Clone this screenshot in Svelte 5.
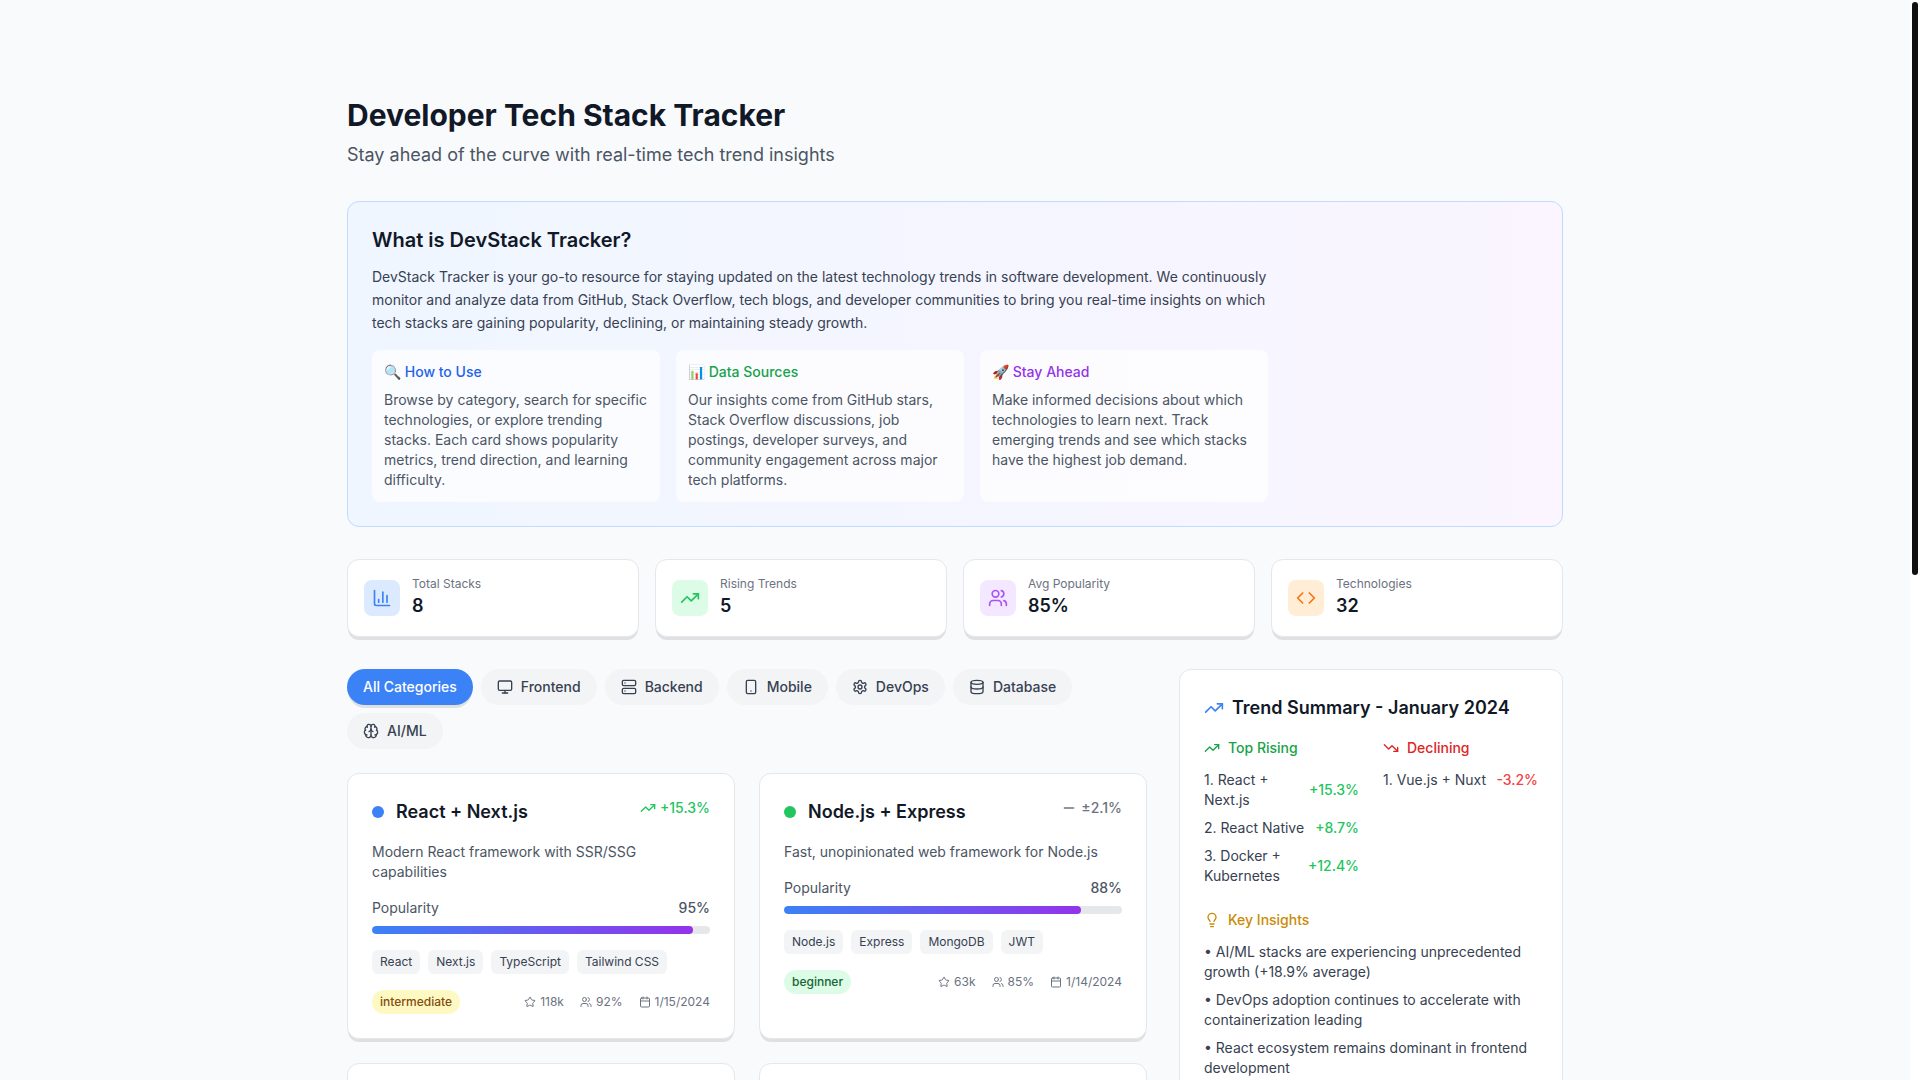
<script lang="ts">
  // Lucide-style 24x24 stroke icons, keyed by name
  const ICONS: Record<string, string> = {
    chart: '<path d="M3 3v16a2 2 0 0 0 2 2h16"/><path d="M18 17V9"/><path d="M13 17V5"/><path d="M8 17v-3"/>',
    up: '<path d="M16 7h6v6"/><path d="m22 7-8.5 8.5-5-5L2 17"/>',
    down: '<path d="M16 17h6v-6"/><path d="m22 17-8.5-8.5-5 5L2 7"/>',
    minus: '<path d="M5 12h14"/>',
    users:
      '<path d="M16 21v-2a4 4 0 0 0-4-4H6a4 4 0 0 0-4 4v2"/><path d="M16 3.128a4 4 0 0 1 0 7.744"/><path d="M22 21v-2a4 4 0 0 0-3-3.87"/><circle cx="9" cy="7" r="4"/>',
    code: '<path d="m16 18 6-6-6-6"/><path d="m8 6-6 6 6 6"/>',
    monitor: '<rect width="20" height="14" x="2" y="3" rx="2"/><path d="M8 21h8"/><path d="M12 17v4"/>',
    server:
      '<rect width="20" height="8" x="2" y="2" rx="2"/><rect width="20" height="8" x="2" y="14" rx="2"/><path d="M6 6h.01"/><path d="M6 18h.01"/>',
    phone: '<rect width="14" height="20" x="5" y="2" rx="2"/><path d="M12 18h.01"/>',
    settings:
      '<path d="M12.22 2h-.44a2 2 0 0 0-2 2v.18a2 2 0 0 1-1 1.73l-.43.25a2 2 0 0 1-2 0l-.15-.08a2 2 0 0 0-2.73.73l-.22.38a2 2 0 0 0 .73 2.73l.15.1a2 2 0 0 1 1 1.72v.51a2 2 0 0 1-1 1.74l-.15.09a2 2 0 0 0-.73 2.73l.22.38a2 2 0 0 0 2.73.73l.15-.08a2 2 0 0 1 2 0l.43.25a2 2 0 0 1 1 1.73V20a2 2 0 0 0 2 2h.44a2 2 0 0 0 2-2v-.18a2 2 0 0 1 1-1.73l.43-.25a2 2 0 0 1 2 0l.15.08a2 2 0 0 0 2.73-.73l.22-.39a2 2 0 0 0-.73-2.73l-.15-.08a2 2 0 0 1-1-1.74v-.5a2 2 0 0 1 1-1.74l.15-.09a2 2 0 0 0 .73-2.73l-.22-.38a2 2 0 0 0-2.73-.73l-.15.08a2 2 0 0 1-2 0l-.43-.25a2 2 0 0 1-1-1.73V4a2 2 0 0 0-2-2z"/><circle cx="12" cy="12" r="3"/>',
    database:
      '<ellipse cx="12" cy="5" rx="9" ry="3"/><path d="M3 5v14a9 3 0 0 0 18 0V5"/><path d="M3 12a9 3 0 0 0 18 0"/>',
    brain:
      '<path d="M12 18V5"/><path d="M15 13a4.17 4.17 0 0 1-3-4 4.17 4.17 0 0 1-3 4"/><path d="M17.598 6.5A3 3 0 1 0 12 5a3 3 0 1 0-5.598 1.5"/><path d="M17.997 5.125a4 4 0 0 1 2.526 5.77"/><path d="M18 18a4 4 0 0 0 2-7.464"/><path d="M19.967 17.483A4 4 0 1 1 12 18a4 4 0 1 1-7.967-.517"/><path d="M6 18a4 4 0 0 1-2-7.464"/><path d="M6.003 5.125a4 4 0 0 0-2.526 5.77"/>',
    bulb: '<path d="M15 14c.2-1 .7-1.7 1.5-2.5 1-.9 1.5-2.2 1.5-3.5A6 6 0 0 0 6 8c0 1 .2 2.2 1.5 3.5.7.7 1.3 1.5 1.5 2.5"/><path d="M9 18h6"/><path d="M10 22h4"/>',
    star: '<path d="M11.525 2.295a.53.53 0 0 1 .95 0l2.31 4.679a2.123 2.123 0 0 0 1.595 1.16l5.166.756a.53.53 0 0 1 .294.904l-3.736 3.638a2.123 2.123 0 0 0-.611 1.878l.882 5.14a.53.53 0 0 1-.771.56l-4.618-2.428a2.122 2.122 0 0 0-1.973 0L6.396 21.01a.53.53 0 0 1-.77-.56l.881-5.139a2.122 2.122 0 0 0-.611-1.879L2.16 9.795a.53.53 0 0 1 .294-.906l5.165-.755a2.122 2.122 0 0 0 1.597-1.16z"/>',
    calendar: '<path d="M8 2v4"/><path d="M16 2v4"/><rect width="18" height="18" x="3" y="4" rx="2"/><path d="M3 10h18"/>',
  }

  const guides = [
    {
      title: '🔍 How to Use',
      tone: 'blue',
      text: 'Browse by category, search for specific technologies, or explore trending stacks. Each card shows popularity metrics, trend direction, and learning difficulty.',
    },
    {
      title: '📊 Data Sources',
      tone: 'green',
      text: 'Our insights come from GitHub stars, Stack Overflow discussions, job postings, developer surveys, and community engagement across major tech platforms.',
    },
    {
      title: '🚀 Stay Ahead',
      tone: 'purple',
      text: 'Make informed decisions about which technologies to learn next. Track emerging trends and see which stacks have the highest job demand.',
    },
  ]

  const stats = [
    { label: 'Total Stacks', value: '8', icon: 'chart', tone: 'blue' },
    { label: 'Rising Trends', value: '5', icon: 'up', tone: 'green' },
    { label: 'Avg Popularity', value: '85%', icon: 'users', tone: 'purple' },
    { label: 'Technologies', value: '32', icon: 'code', tone: 'orange' },
  ]

  const categories = [
    { name: 'All Categories', icon: '' },
    { name: 'Frontend', icon: 'monitor' },
    { name: 'Backend', icon: 'server' },
    { name: 'Mobile', icon: 'phone' },
    { name: 'DevOps', icon: 'settings' },
    { name: 'Database', icon: 'database' },
    { name: 'AI/ML', icon: 'brain' },
  ]
  let active = $state('All Categories')

  const stacks = [
    {
      name: 'React + Next.js',
      tone: 'blue',
      trend: 'up',
      change: '+15.3%',
      description: 'Modern React framework with SSR/SSG capabilities',
      popularity: 95,
      tags: ['React', 'Next.js', 'TypeScript', 'Tailwind CSS'],
      level: 'intermediate',
      stars: '118k',
      demand: '92%',
      updated: '1/15/2024',
    },
    {
      name: 'Node.js + Express',
      tone: 'green',
      trend: 'minus',
      change: '±2.1%',
      description: 'Fast, unopinionated web framework for Node.js',
      popularity: 88,
      tags: ['Node.js', 'Express', 'MongoDB', 'JWT'],
      level: 'beginner',
      stars: '63k',
      demand: '85%',
      updated: '1/14/2024',
    },
  ]
  const pending = 6 // cards still to be filled in

  const rising = [
    { name: 'React + Next.js', change: '+15.3%' },
    { name: 'React Native', change: '+8.7%' },
    { name: 'Docker + Kubernetes', change: '+12.4%' },
  ]
  const declining = [{ name: 'Vue.js + Nuxt', change: '-3.2%' }]
  const insights = [
    'AI/ML stacks are experiencing unprecedented growth (+18.9% average)',
    'DevOps adoption continues to accelerate with containerization leading',
    'React ecosystem remains dominant in frontend development',
  ]

  // the native scrollbar is hidden; the rail beside the page follows these
  let scrollTop = $state(0)
  let scrollHeight = $state(1)
  let viewHeight = $state(1)
  let scroller: HTMLDivElement

  function measure() {
    scrollTop = scroller.scrollTop
    scrollHeight = scroller.scrollHeight
    viewHeight = scroller.clientHeight
  }
  $effect(measure)
</script>

<svelte:window onresize={measure} />

{#snippet icon(name: string, size = 16)}
  <svg
    width={size}
    height={size}
    viewBox="0 0 24 24"
    fill="none"
    stroke="currentColor"
    stroke-width="2"
    stroke-linecap="round"
    stroke-linejoin="round"
    aria-hidden="true">{@html ICONS[name]}</svg>
{/snippet}

<div class="shell">
  <div class="scroller" bind:this={scroller} onscroll={measure}>
    <div class="page">
      <header>
        <h1>Developer Tech Stack Tracker</h1>
        <p>Stay ahead of the curve with real-time tech trend insights</p>
      </header>

      <section class="about">
        <h2>What is DevStack Tracker?</h2>
        <div class="about-body">
          <p>
            DevStack Tracker is your go-to resource for staying updated on the latest technology trends in software
            development. We continuously monitor and analyze data from GitHub, Stack Overflow, tech blogs, and developer
            communities to bring you real-time insights on which tech stacks are gaining popularity, declining, or
            maintaining steady growth.
          </p>
          <div class="guides">
            {#each guides as g}
              <div class="guide">
                <h3 class={g.tone}>{g.title}</h3>
                <p>{g.text}</p>
              </div>
            {/each}
          </div>
        </div>
      </section>

      <section class="stats">
        {#each stats as s}
          <div class="stat card">
            <div class="stat-icon {s.tone}">{@render icon(s.icon, 20)}</div>
            <div>
              <p class="stat-label">{s.label}</p>
              <p class="stat-value">{s.value}</p>
            </div>
          </div>
        {/each}
      </section>

      <div class="columns">
        <main>
          <div class="pills">
            {#each categories as c}
              <button type="button" class="pill" class:active={active === c.name} onclick={() => (active = c.name)}>
                {#if c.icon}{@render icon(c.icon)}{/if}
                {c.name}
              </button>
            {/each}
          </div>

          <div class="stacks">
            {#each stacks as s}
              <article class="stack card">
                <div class="stack-head">
                  <div class="stack-name">
                    <span class="dot {s.tone}"></span>
                    <h3>{s.name}</h3>
                  </div>
                  <span class="change {s.trend}">{@render icon(s.trend)}{s.change}</span>
                </div>
                <p class="description">{s.description}</p>
                <div class="popularity">
                  <span>Popularity</span>
                  <strong>{s.popularity}%</strong>
                </div>
                <div class="bar"><div class="fill" style="width:{s.popularity}%"></div></div>
                <div class="tags">
                  {#each s.tags as t}
                    <span class="tag">{t}</span>
                  {/each}
                </div>
                <div class="stack-foot">
                  <span class="level {s.level}">{s.level}</span>
                  <div class="meta">
                    <span>{@render icon('star', 12)}{s.stars}</span>
                    <span>{@render icon('users', 12)}{s.demand}</span>
                    <span>{@render icon('calendar', 12)}{s.updated}</span>
                  </div>
                </div>
              </article>
            {/each}
            {#each { length: pending } as _}
              <article class="stack card blank"></article>
            {/each}
          </div>
        </main>

        <aside>
          <div class="summary card">
            <h3 class="summary-title">{@render icon('up', 20)}<span>Trend Summary - January 2024</span></h3>
            <div class="movers">
              <div>
                <h4 class="green">{@render icon('up')}Top Rising</h4>
                <ul>
                  {#each rising as r, i}
                    <li class="mover"><span>{i + 1}. {r.name}</span><span class="change up">{r.change}</span></li>
                  {/each}
                </ul>
              </div>
              <div>
                <h4 class="red">{@render icon('down')}Declining</h4>
                <ul>
                  {#each declining as d, i}
                    <li class="mover"><span>{i + 1}. {d.name}</span><span class="change down">{d.change}</span></li>
                  {/each}
                </ul>
              </div>
            </div>
            <h4 class="yellow">{@render icon('bulb')}Key Insights</h4>
            <ul>
              {#each insights as text}
                <li>• {text}</li>
              {/each}
            </ul>
          </div>
        </aside>
      </div>
    </div>
  </div>
  <div class="rail" aria-hidden="true">
    <div
      class="thumb"
      style="height:{(viewHeight / scrollHeight) * 100}%; margin-top:{(scrollTop / scrollHeight) * viewHeight}px"
    ></div>
  </div>
</div>

<style>
  :global(body) {
    margin: 0;
    background: #f9fafb;
  }
  .shell {
    display: flex;
    height: 100vh;
    overflow: hidden;
  }
  .scroller {
    flex: 1;
    overflow-y: auto;
    scrollbar-width: none;
    background: #f9fafc;
    color: #111827;
    font: 14px/20px Inter, 'Liberation Sans', sans-serif;
    font-optical-sizing: none;
  }
  .rail {
    width: 10px;
    background: #fff;
  }
  .thumb {
    box-sizing: border-box;
    border: 2px solid transparent;
    border-radius: 5px;
    background: #111;
    background-clip: padding-box;
  }
  .page {
    box-sizing: border-box;
    max-width: 1280px;
    margin: 0 auto;
    padding: 97px 32px 112px;
  }
  h1,
  h2,
  h3,
  h4,
  p,
  ul {
    margin: 0;
    padding: 0;
  }
  ul {
    list-style: none;
    display: flex;
    flex-direction: column;
    gap: 8px;
    color: #374151;
  }
  svg {
    flex-shrink: 0;
    display: block;
  }

  .card {
    background: #fff;
    border: 1px solid #e5e7eb;
    border-radius: 12px;
    box-shadow: 0 4px 0 -1px rgba(0, 0, 0, 0.1);
  }

  /* ---------- header ---------- */
  header {
    margin-bottom: 32px;
  }
  h1 {
    margin-bottom: 8px;
    font-size: 30px;
    line-height: 36px;
    font-weight: 700;
  }
  header p {
    font-size: 18px;
    line-height: 28px;
    color: #4b5563;
  }

  /* ---------- about ---------- */
  .about {
    margin-bottom: 32px;
    padding: 24px;
    border: 1px solid #bfdbfe;
    border-radius: 12px;
    background: linear-gradient(to right, #eff6ff, #faf5ff);
  }
  h2 {
    margin-bottom: 12px;
    font-size: 20px;
    line-height: 28px;
    font-weight: 600;
  }
  .about-body {
    max-width: 896px;
  }
  .about-body > p {
    margin-bottom: 16px;
    line-height: 1.625;
    color: #374151;
  }
  .guides {
    display: grid;
    grid-template-columns: repeat(3, 1fr);
    gap: 16px;
  }
  .guide {
    padding: 12px;
    border-radius: 8px;
    background: rgba(255, 255, 255, 0.7);
  }
  .guide h3 {
    margin-bottom: 8px;
    font-size: 14px;
    font-weight: 500;
  }
  .guide h3.blue {
    color: #2563eb;
  }
  .guide h3.green {
    color: #16a34a;
  }
  .guide h3.purple {
    color: #9333ea;
  }
  .guide p {
    color: #4b5563;
  }

  /* ---------- stats ---------- */
  .stats {
    display: grid;
    grid-template-columns: repeat(4, 1fr);
    gap: 16px;
    margin-bottom: 32px;
  }
  .stat {
    display: flex;
    align-items: center;
    gap: 12px;
    padding: 16px;
  }
  .stat-icon {
    padding: 8px;
    border-radius: 8px;
  }
  .stat-icon.blue {
    background: #dbeafe;
    color: #3b82f6;
  }
  .stat-icon.green {
    background: #dcfce7;
    color: #22c55e;
  }
  .stat-icon.purple {
    background: #f3e8ff;
    color: #a855f7;
  }
  .stat-icon.orange {
    background: #ffedd5;
    color: #f97316;
  }
  .stat-label {
    font-size: 12px;
    line-height: 16px;
    color: #6b7280;
  }
  .stat-value {
    font-size: 18px;
    line-height: 28px;
    font-weight: 600;
  }

  .columns {
    display: grid;
    grid-template-columns: repeat(3, 1fr);
    gap: 32px;
    align-items: start;
  }
  main {
    grid-column: span 2;
  }

  /* ---------- category pills ---------- */
  .pills {
    display: flex;
    flex-wrap: wrap;
    gap: 8px;
    margin-bottom: 24px;
  }
  .pill {
    display: flex;
    align-items: center;
    gap: 8px;
    padding: 8px 16px;
    border: 0;
    border-radius: 18px;
    background: #f3f4f6;
    color: #374151;
    font: inherit;
    font-weight: 500;
    cursor: pointer;
  }
  .pill.active {
    background: #3b82f6;
    color: #fff;
    box-shadow: 0 4px 0 -1px rgba(0, 0, 0, 0.1);
  }

  /* ---------- stack cards ---------- */
  .stacks {
    display: grid;
    grid-template-columns: repeat(2, 1fr);
    gap: 24px;
  }
  .stack {
    padding: 24px;
  }
  .blank {
    min-height: 216px;
  }
  .stack-head {
    display: flex;
    justify-content: space-between;
    align-items: flex-start;
    margin-bottom: 16px;
  }
  .stack-name {
    display: flex;
    align-items: center;
    gap: 12px;
  }
  .stack h3,
  .summary-title {
    font-size: 18px;
    line-height: 28px;
    font-weight: 600;
  }
  .dot {
    width: 12px;
    height: 12px;
    border-radius: 50%;
  }
  .dot.blue {
    background: #3b82f6;
  }
  .dot.green {
    background: #22c55e;
  }
  .change {
    display: flex;
    align-items: center;
    gap: 4px;
    font-weight: 500;
  }
  .change.up {
    color: #22c55e;
  }
  .change.down {
    color: #ef4444;
  }
  .change.minus {
    color: #6b7280;
  }
  .description {
    margin-bottom: 16px;
    color: #4b5563;
  }
  .popularity {
    display: flex;
    justify-content: space-between;
    margin-bottom: 8px;
    color: #4b5563;
  }
  .popularity strong {
    font-weight: 500;
  }
  .bar {
    height: 8px;
    margin-bottom: 16px;
    border-radius: 4px;
    background: #e5e7eb;
    overflow: hidden;
  }
  .fill {
    height: 100%;
    border-radius: 4px;
    background: linear-gradient(to right, #3b82f6, #9333ea);
  }
  .tags {
    display: flex;
    flex-wrap: wrap;
    gap: 8px;
    margin-bottom: 16px;
  }
  .tag,
  .level {
    padding: 4px 8px;
    font-size: 12px;
    line-height: 16px;
  }
  .tag {
    border-radius: 6px;
    background: #f3f4f6;
    color: #374151;
  }
  .level {
    border-radius: 12px;
    font-weight: 500;
  }
  .level.intermediate {
    background: #fef9c3;
    color: #854d0e;
  }
  .level.beginner {
    background: #dcfce7;
    color: #166534;
  }
  .stack-foot {
    display: flex;
    justify-content: space-between;
    align-items: center;
  }
  .meta {
    display: flex;
    gap: 16px;
    font-size: 12px;
    line-height: 16px;
    color: #6b7280;
  }
  .meta span {
    display: flex;
    align-items: center;
    gap: 4px;
  }

  /* ---------- trend summary ---------- */
  .summary {
    padding: 24px;
  }
  .summary-title {
    display: flex;
    align-items: center;
    gap: 8px;
    margin-bottom: 16px;
  }
  .summary-title :global(svg) {
    color: #3b82f6;
  }
  .movers {
    display: grid;
    grid-template-columns: repeat(2, 1fr);
    gap: 24px;
    margin-bottom: 24px;
  }
  h4 {
    display: flex;
    align-items: center;
    gap: 8px;
    margin-bottom: 12px;
    font-size: 14px;
    font-weight: 500;
  }
  h4.green {
    color: #16a34a;
  }
  h4.red {
    color: #dc2626;
  }
  h4.yellow {
    color: #ca8a04;
  }
  .mover {
    display: flex;
    justify-content: space-between;
    align-items: center;
  }
</style>
